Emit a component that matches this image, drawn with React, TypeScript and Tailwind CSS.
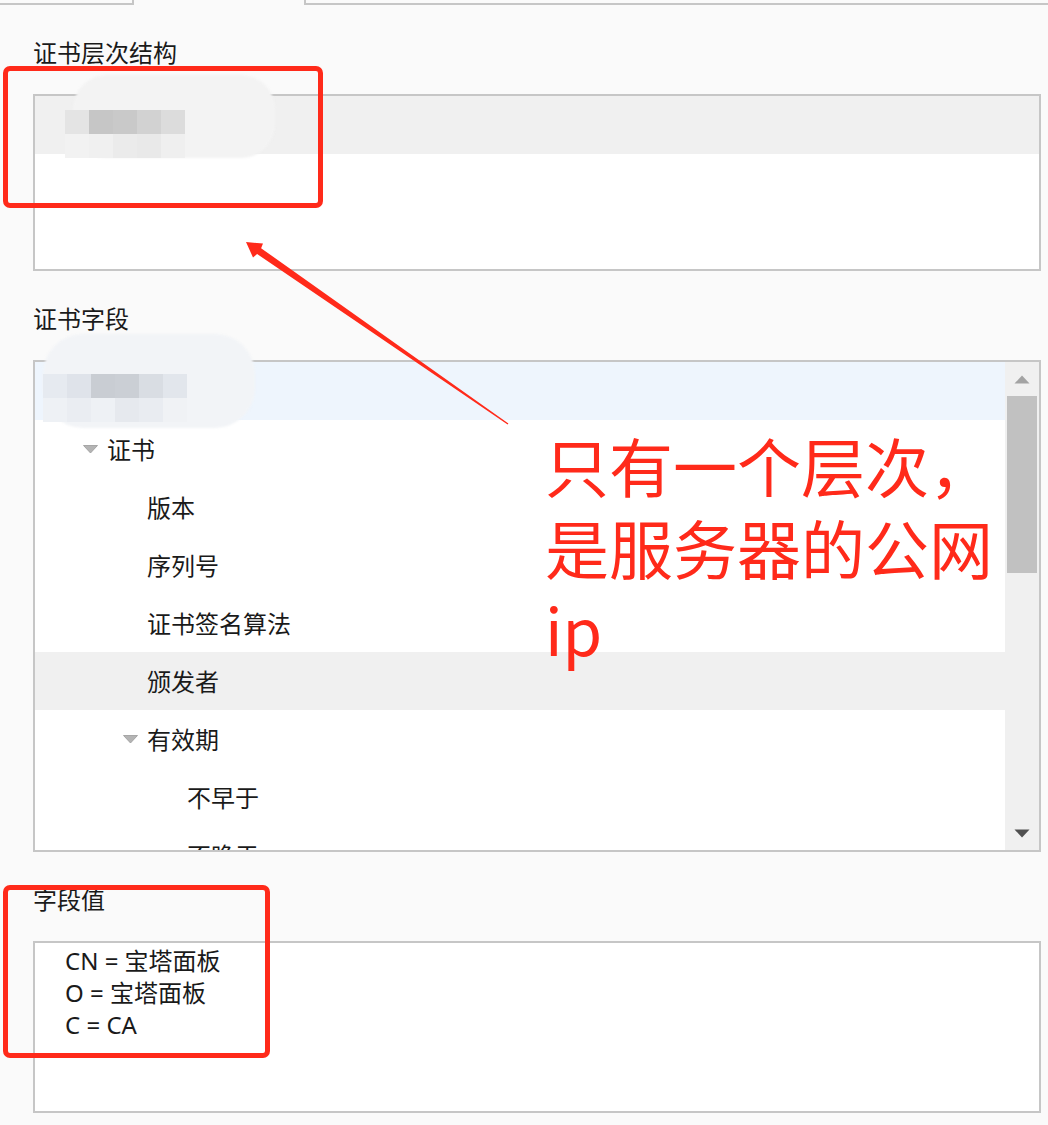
import React from "react";

const FONT = '"Noto Sans", "Noto Sans CJK SC", sans-serif';

function Tri({ color, down = true }: { color: string; down?: boolean }) {
  return (
    <svg width="16" height="9" viewBox="0 0 16 9" className="block">
      {down ? (
        <polygon points="0.5,0.5 15.5,0.5 8,8.5" fill={color} />
      ) : (
        <polygon points="0.5,8.5 15.5,8.5 8,0.5" fill={color} />
      )}
    </svg>
  );
}

function Expander() {
  return (
    <svg width="15" height="9" viewBox="0 0 15 9" className="block">
      <polygon points="0.5,0.5 14.5,0.5 7.5,8" fill="#b4b4b4" stroke="#9a9a9a" strokeWidth="0.8" />
    </svg>
  );
}

function Row({
  text,
  level,
  expander,
  bg,
}: {
  text: string;
  level: number;
  expander?: boolean;
  bg?: string;
}) {
  const pad = level === 1 ? "pl-[48px]" : level === 2 ? "pl-[88px]" : "pl-[128px]";
  return (
    <div className={`h-[58px] flex items-center ${pad} ${bg ?? ""}`}>
      <div className="w-[24px] flex items-center">{expander ? <Expander /> : null}</div>
      <span className="text-[24px] leading-[32px] text-[#1a1a1a] pt-[2px]">{text}</span>
    </div>
  );
}

function Mosaic({ cells }: { cells: string[][] }) {
  return (
    <div className="flex flex-col">
      {cells.map((r, i) => (
        <div key={i} className="flex">
          {r.map((c, j) => (
            <div key={j} className="w-[24px] h-[24px]" style={{ background: c }} />
          ))}
        </div>
      ))}
    </div>
  );
}

export default function App() {
  return (
    <div
      className="relative w-[1048px] h-[1125px] bg-[#fafafa] overflow-hidden"
      style={{ fontFamily: FONT }}
    >
      {/* tabs strip */}
      <div className="flex h-[5px]">
        <div className="w-[134px] border-b-2 border-r-2 border-[#c6c6c6]" />
        <div className="w-[170px]" />
        <div className="flex-1 border-b-2 border-l-2 border-[#c6c6c6]" />
      </div>

      <div className="pl-[33px] pr-[7px]">
        {/* section 1 */}
        <div className="mt-[33px] h-[30px] text-[24px] leading-[30px] text-[#1a1a1a]">证书层次结构</div>
        <div className="mt-[26px] h-[177px] border-2 border-[#c6c6c6] bg-white">
          <div className="h-[58px] bg-[#f0f0f0]" />
        </div>

        {/* section 2 */}
        <div className="mt-[33px] h-[30px] text-[24px] leading-[30px] text-[#1a1a1a]">证书字段</div>
        <div className="mt-[26px] h-[492px] border-2 border-[#c6c6c6] bg-white flex">
          <div className="flex-1 overflow-hidden">
            <div className="h-[58px] bg-[#eef5fd]" />
            <Row text="证书" level={1} expander />
            <Row text="版本" level={2} />
            <Row text="序列号" level={2} />
            <Row text="证书签名算法" level={2} />
            <Row text="颁发者" level={2} bg="bg-[#f0f0f0]" />
            <Row text="有效期" level={2} expander />
            <Row text="不早于" level={3} />
            <Row text="不晚于" level={3} />
          </div>
          <div className="w-[34px] bg-[#f0f0f0] flex flex-col">
            <div className="h-[34px] flex items-center justify-center">
              <Tri color="#a3a3a3" down={false} />
            </div>
            <div className="mx-[2px] h-[177px] bg-[#c1c1c1]" />
            <div className="flex-1" />
            <div className="h-[34px] flex items-center justify-center">
              <Tri color="#505050" />
            </div>
          </div>
        </div>

        {/* section 3 */}
        <div className="mt-[33px] h-[30px] text-[24px] leading-[30px] text-[#1a1a1a]">字段值</div>
        <div className="mt-[26px] h-[172px] border-2 border-[#c6c6c6] bg-white pl-[30px] pt-[2px] text-[24px] leading-[32px] text-[#1a1a1a]">
          <div>CN = 宝塔面板</div>
          <div>O = 宝塔面板</div>
          <div>C = CA</div>
        </div>
      </div>

      {/* blurred mosaic 1 */}
      <div className="absolute left-[73px] top-[75px] w-[202px] h-[83px] rounded-[34px] bg-[#f3f3f3] blur-[1px]" />
      <div className="absolute left-[65px] top-[110px]">
        <Mosaic
          cells={[
            ["#e4e4e4", "#c6c6c6", "#c9c9c9", "#d2d2d2", "#dcdcdc"],
            ["#f2f2f2", "#f0f0f0", "#ebebeb", "#e9e9e9", "#efefef"],
          ]}
        />
      </div>

      {/* blurred mosaic 2 */}
      <div className="absolute left-[43px] top-[334px] w-[212px] h-[94px] rounded-[40px] bg-[#f2f4f7] blur-[1px]" />
      <div className="absolute left-[43px] top-[374px]">
        <Mosaic
          cells={[
            ["#e6eaf0", "#dfe3ea", "#c9cdd3", "#cbcfd5", "#d9dde3", "#e2e6ec"],
            ["#eef1f5", "#eaedf2", "#eef1f5", "#e6e9ee", "#e9ecf1", "#f0f2f5"],
          ]}
        />
      </div>

      {/* red rectangles */}
      <div className="absolute left-[3px] top-[66px] w-[320px] h-[142px] border-[5px] border-[#ff2a1a] rounded-[7px]" />
      <div className="absolute left-[3px] top-[885px] w-[267px] h-[173px] border-[5px] border-[#ff2a1a] rounded-[7px]" />

      {/* arrow */}
      <svg className="absolute left-0 top-0" width="1048" height="1125" viewBox="0 0 1048 1125">
        <polygon
          points="246,242 263,243.5 261.1,248.2 508.4,423.6 507.6,424.4 257.1,254 253,257.5"
          fill="#ff2a1a"
        />
      </svg>

      {/* annotation text */}
      <div
        className="absolute left-[545px] top-[423px] text-[64px] leading-[82px] text-[#ff2a1a]"
        style={{ fontFamily: '"Noto Sans CJK SC", "Noto Sans", sans-serif' }}
      >
        <div>只有一个层次，</div>
        <div>是服务器的公网</div>
        <div>ip</div>
      </div>
    </div>
  );
}
